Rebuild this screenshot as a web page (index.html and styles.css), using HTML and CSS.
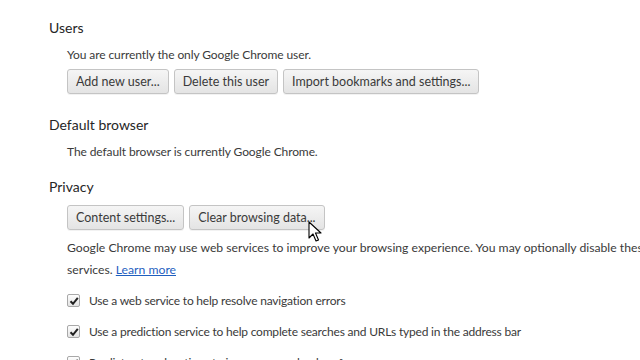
FILE: index.html
```html
<!DOCTYPE html>
<html>
<head>
<meta charset="utf-8">
<link rel="stylesheet" href="styles.css">
</head>
<body>
<div class="page">
  <section class="section">
    <h3 class="heading">Users</h3>
    <div class="body">
      <p class="text">You are currently the only Google Chrome user.</p>
      <div class="buttons">
        <button class="btn">Add new user...</button>
        <button class="btn">Delete this user</button>
        <button class="btn">Import bookmarks and settings...</button>
      </div>
    </div>
  </section>
  <section class="section section-text">
    <h3 class="heading">Default browser</h3>
    <div class="body">
      <p class="text">The default browser is currently Google Chrome.</p>
    </div>
  </section>
  <section class="section">
    <h3 class="heading">Privacy</h3>
    <div class="body">
      <div class="buttons buttons-top">
        <button class="btn">Content settings...</button>
        <span class="btn-wrap">
          <button class="btn">Clear browsing data...</button>
          <svg class="cursor" width="14" height="22" viewBox="0 0 14 22"><path d="M1 1 L1 17 L5 13 L8 20 L10.5 19 L7.5 12 L13 12 Z" fill="#fff" stroke="#000" stroke-width="1.1" stroke-linejoin="round"/></svg>
        </span>
      </div>
      <p class="para">Google Chrome may use web services to improve your browsing experience. You may optionally disable these services. <a class="link" href="#">Learn more</a></p>
      <label class="check"><span class="box"><svg width="12" height="12" viewBox="0 0 12 12"><path d="M2.5 6.2 L5 8.8 L9.8 2.8" fill="none" stroke="#222" stroke-width="2"/></svg></span>Use a web service to help resolve navigation errors</label>
      <label class="check"><span class="box"><svg width="12" height="12" viewBox="0 0 12 12"><path d="M2.5 6.2 L5 8.8 L9.8 2.8" fill="none" stroke="#222" stroke-width="2"/></svg></span>Use a prediction service to help complete searches and URLs typed in the address bar</label>
      <label class="check"><span class="box"><svg width="12" height="12" viewBox="0 0 12 12"><path d="M2.5 6.2 L5 8.8 L9.8 2.8" fill="none" stroke="#222" stroke-width="2"/></svg></span>Predict network actions to improve page load performance</label>
    </div>
  </section>
</div>
</body>
</html>
```
FILE: styles.css
```css
html, body {
  margin: 0;
  padding: 0;
  background: #fff;
  overflow: hidden;
}
.page {
  width: 640px;
  height: 360px;
  overflow: hidden;
  padding: 19px 0 0 49px;
  box-sizing: border-box;
  font-family: Lato, "Open Sans", sans-serif;
  color: #3a3a3a;
}
.section {
  margin-bottom: 22px;
}
.section-text {
  margin-bottom: 18px;
}
.heading {
  margin: 0;
  font-weight: normal;
  font-size: 14px;
  line-height: 18px;
  color: #262626;
}
.body {
  padding-left: 18px;
}
.text {
  margin: 10px 0 0;
  font-size: 12px;
  letter-spacing: -0.1px;
  line-height: 16px;
  white-space: nowrap;
}
.buttons {
  display: flex;
  gap: 5px;
  margin-top: 6px;
}
.buttons-top {
  margin-top: 9px;
}
.btn {
  font-family: inherit;
  font-size: 12.5px;
  color: #3a3a3a;
  height: 25px;
  padding: 0 8px;
  border: 1px solid #c4c4c4;
  border-radius: 3px;
  background: linear-gradient(#f5f5f5, #e4e4e4);
  box-shadow: 0 1px 0 rgba(0,0,0,0.05);
  white-space: nowrap;
}
.btn-wrap {
  position: relative;
  display: flex;
}
.cursor {
  position: absolute;
  left: 119px;
  top: 16px;
}
.para {
  margin: 7px 0 0;
  font-size: 12.2px;
  line-height: 22px;
  width: 600px;
}
.link {
  color: #1f5fbf;
  text-decoration: underline;
}
.check {
  display: flex;
  align-items: center;
  font-size: 12px;
  letter-spacing: -0.2px;
  height: 31px;
  white-space: nowrap;
}
.para + .check {
  margin-top: 4px;
}
.box {
  width: 11px;
  height: 11px;
  border: 1px solid #a8a8a8;
  border-radius: 2px;
  background: linear-gradient(#fdfdfd, #e4e4e4);
  margin-right: 9px;
  display: flex;
  align-items: center;
  justify-content: center;
}
.box svg {
  flex: none;
}
```
